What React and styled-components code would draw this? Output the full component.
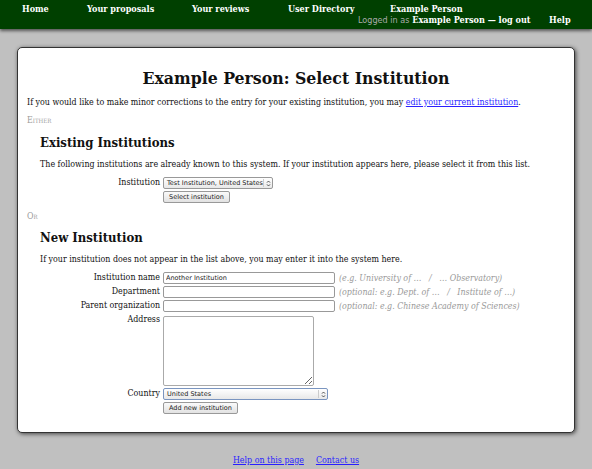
import styled, { createGlobalStyle } from "styled-components";

const GlobalStyle = createGlobalStyle`
  html, body {
    margin: 0;
    padding: 0;
    background: #c0c0c0;
    font-family: "DejaVu Serif Condensed", "DejaVu Serif", serif;
    font-stretch: condensed;
    font-size: 8.8px;
    color: #111;
  }
`;

const NavBar = styled.div`
  height: 29px;
  background: #004000;
  box-shadow: 0 2px 3px rgba(0, 0, 0, 0.55);
  display: flex;
  align-items: flex-start;
  padding: 4px 0 0 22px;
  box-sizing: border-box;
  color: #fff;
  font-weight: bold;
  font-size: 9px;
`;

const NavItem = styled.div`
  width: ${(props) => props.w}px;
  margin-top: ${(props) => props.top || 0}px;
  line-height: 11px;
  white-space: nowrap;
`;

const UserBox = styled.div`
  width: 191px;
  display: flex;
  flex-direction: column;
  line-height: 11px;
  white-space: nowrap;
`;

const UserName = styled.span`
  padding-left: 32px;
`;

const Dim = styled.span`
  color: #aaa;
  font-family: "DejaVu Sans Condensed", "DejaVu Sans", sans-serif;
  font-weight: normal;
`;

const Card = styled.div`
  margin: 18px 17px 0 17px;
  background: #fff;
  border: 1px solid #333;
  border-radius: 5px;
  box-shadow: 1px 1px 4px rgba(0, 0, 0, 0.65);
  padding: 20px 9px 0 9px;
  height: 386px;
  box-sizing: border-box;
`;

const Title = styled.h1`
  margin: 0 0 9px;
  text-align: center;
  font-size: 17.5px;
  line-height: 20px;
`;

const Para = styled.p`
  margin: ${(props) => props.m || "0"};
  line-height: 11px;
`;

const Link = styled.a`
  color: #2a1fff;
  text-decoration: underline;
`;

const Choice = styled.div`
  font-variant: small-caps;
  font-stretch: normal;
  color: #9a9a9a;
  line-height: 11px;
  margin: ${(props) => props.m};
`;

const Section = styled.div`
  padding-left: 13px;
`;

const Heading = styled.h2`
  margin: 0 0 8px;
  font-size: 13px;
  line-height: 16px;
`;

const FormGrid = styled.div`
  display: grid;
  grid-template-columns: 120px auto;
  column-gap: 3px;
  row-gap: 2px;
  align-items: start;
  justify-items: start;
`;

const Label = styled.label`
  justify-self: end;
  line-height: 11px;
  white-space: nowrap;
`;

const Field = styled.div`
  display: flex;
  align-items: center;
  gap: 4px;
`;

const Hint = styled.span`
  color: #999;
  font-style: italic;
  white-space: pre;
  line-height: 12px;
`;

const TextInput = styled.input`
  width: 172px;
  height: 12px;
  box-sizing: border-box;
  border: 1px solid #999;
  border-radius: 2px;
  font-family: "DejaVu Sans", sans-serif;
  font-stretch: normal;
  font-size: 6.5px;
  padding: 0 2px;
  margin: 0;
  color: #222;
`;

const Area = styled.textarea`
  width: 151px;
  height: 70px;
  box-sizing: border-box;
  border: 1px solid #aaa;
  border-radius: 2px;
  margin: 2px 0 0;
  resize: both;
`;

const Select = styled.div`
  width: ${(props) => props.w}px;
  height: 12px;
  box-sizing: border-box;
  border: 1px solid ${(props) => (props.focus ? "#7a95c0" : "#999")};
  border-radius: 2px;
  background: linear-gradient(#fff, #e8e8e8);
  font-family: "DejaVu Sans", sans-serif;
  font-stretch: normal;
  font-size: 6.5px;
  display: flex;
  align-items: center;
  justify-content: space-between;
  padding: 0 0 0 3px;
  color: #222;
  white-space: nowrap;
`;

const Arrows = styled.span`
  border-left: 1px solid #ccc;
  width: 8px;
  height: 8px;
  display: flex;
  align-items: center;
  justify-content: center;
`;

const Button = styled.button`
  height: 12px;
  padding: 0 5px;
  border: 1px solid #999;
  border-radius: 2px;
  background: linear-gradient(#fafafa, #e2e2e2);
  font-family: "DejaVu Sans", sans-serif;
  font-stretch: normal;
  font-size: 6.5px;
  color: #222;
  line-height: 10px;
  margin: 0;
`;

const Footer = styled.div`
  display: flex;
  justify-content: center;
  gap: 12px;
  padding-top: 22px;
  line-height: 11px;
`;

function UpDown() {
  return (
    <Arrows>
      <svg width="5" height="7" viewBox="0 0 5 7">
        <path
          d="M1 2.6 L2.5 1 L4 2.6 M1 4.4 L2.5 6 L4 4.4"
          fill="none"
          stroke="#444"
          strokeWidth="0.9"
        />
      </svg>
    </Arrows>
  );
}

function App() {
  return (
    <>
      <GlobalStyle />
      <NavBar>
        <NavItem w={65}>Home</NavItem>
        <NavItem w={105}>Your proposals</NavItem>
        <NavItem w={96}>Your reviews</NavItem>
        <NavItem w={70}>User Directory</NavItem>
        <UserBox>
          <UserName>Example Person</UserName>
          <span>
            <Dim>Logged in as</Dim> Example Person — log out
          </span>
        </UserBox>
        <NavItem w={30} top={11}>
          Help
        </NavItem>
      </NavBar>
      <Card>
        <Title>Example Person: Select Institution</Title>
        <Para>
          If you would like to make minor corrections to the entry for your
          existing institution, you may{" "}
          <Link href="#">edit your current institution</Link>.
        </Para>
        <Choice m="7px 0 9px">Either</Choice>
        <Section>
          <Heading>Existing Institutions</Heading>
          <Para m="0 0 7px">
            The following institutions are already known to this system. If
            your institution appears here, please select it from this list.
          </Para>
          <FormGrid>
            <Label>Institution</Label>
            <Select w={110}>
              Test Institution, United States <UpDown />
            </Select>
            <span />
            <Button>Select institution</Button>
          </FormGrid>
        </Section>
        <Choice m="8px 0 8px">Or</Choice>
        <Section>
          <Heading>New Institution</Heading>
          <Para m="0 0 7px">
            If your institution does not appear in the list above, you may
            enter it into the system here.
          </Para>
          <FormGrid>
            <Label>Institution name</Label>
            <Field>
              <TextInput defaultValue="Another Institution" />
              <Hint>(e.g. University of …   /   … Observatory)</Hint>
            </Field>
            <Label>Department</Label>
            <Field>
              <TextInput />
              <Hint>(optional: e.g. Dept. of …   /   Institute of …)</Hint>
            </Field>
            <Label>Parent organization</Label>
            <Field>
              <TextInput />
              <Hint>(optional: e.g. Chinese Academy of Sciences)</Hint>
            </Field>
            <Label>Address</Label>
            <Area />
            <Label>Country</Label>
            <Select w={165} focus>
              United States <UpDown />
            </Select>
            <span />
            <Button>Add new institution</Button>
          </FormGrid>
        </Section>
      </Card>
      <Footer>
        <Link href="#">Help on this page</Link>
        <Link href="#">Contact us</Link>
      </Footer>
    </>
  );
}

export default App;
